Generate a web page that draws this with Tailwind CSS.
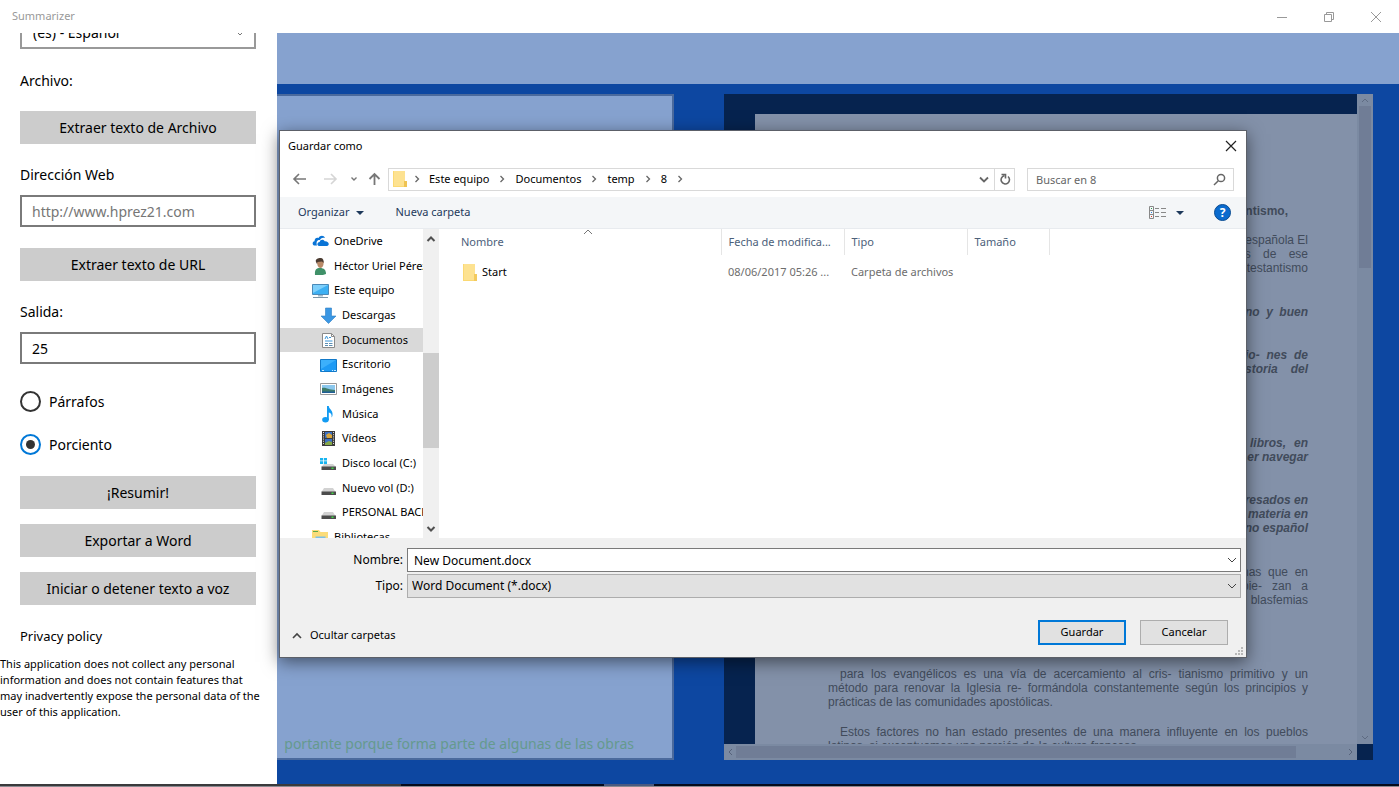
<!DOCTYPE html>
<html lang="es">
<head>
    <meta charset="UTF-8">
    <meta name="viewport" content="width=device-width, initial-scale=1.0">
    <title>Summarizer</title>
    <script src="https://cdn.jsdelivr.net/npm/@tailwindcss/browser@4"></script>
</head>
<body class="relative flex h-screen flex-col overflow-hidden bg-white font-['Noto_Sans',sans-serif] text-black">

    <!-- Barra de título -->
    <header class="flex h-[33px] shrink-0 items-center justify-between pl-3 text-[#999]">
        <span class="text-[11px]">Summarizer</span>
        <div class="flex">
            <button class="flex h-8 w-[47px] items-center justify-center" aria-label="Minimizar">
                <svg class="h-3 w-3" viewBox="0 0 12 12" fill="none" stroke="currentColor"><path d="M1 6.500h10"/></svg>
            </button>
            <button class="flex h-8 w-[47px] items-center justify-center" aria-label="Restaurar">
                <svg class="h-3 w-3" viewBox="0 0 12 12" fill="none" stroke="currentColor"><path d="M1.500 3.500h7v7h-7zM3.500 3.500v-2h7v7h-2"/></svg>
            </button>
            <button class="flex h-8 w-[47px] items-center justify-center" aria-label="Cerrar">
                <svg class="h-3 w-3" viewBox="0 0 12 12" fill="none" stroke="currentColor"><path d="M1 1l10 10M11 1L1 11"/></svg>
            </button>
        </div>
    </header>

    <main class="flex min-h-0 flex-1">

        <!-- Panel lateral -->
        <aside class="flex w-[277px] shrink-0 flex-col overflow-hidden bg-white text-sm">
            <form class="-mt-4 flex flex-col px-5 pr-[21px]">
                <div class="relative">
                    <select class="h-8 w-full appearance-none border-2 border-[#999] bg-white px-[11px]" aria-label="Idioma">
                        <option>(es) - Español</option>
                    </select>
                    <svg class="pointer-events-none absolute right-3 top-3 h-2 w-2" viewBox="0 0 8 8" fill="none" stroke="#777"><path d="M.5 2.500L4 6l3.500-3.500"/></svg>
                </div>

                <label for="archivo" class="mt-[22px] leading-5">Archivo:</label>
                <button id="archivo" type="button" class="mt-5 h-[33px] bg-[#ccc]">Extraer texto de Archivo</button>

                <label for="url" class="mt-[21px] leading-5">Dirección Web</label>
                <input id="url" type="url" placeholder="http://www.hprez21.com" class="mt-[10px] h-8 border-2 border-[#7a7a7a] px-[10px] placeholder:text-[#767676]">
                <button type="button" class="mt-[21px] h-[33px] bg-[#ccc]">Extraer texto de URL</button>

                <label for="salida" class="mt-[21px] leading-5">Salida:</label>
                <input id="salida" type="text" value="25" class="mt-[10px] h-8 border-2 border-[#7a7a7a] px-[10px]">

                <label class="mt-[27px] flex h-[21px] items-center gap-2">
                    <input type="radio" name="modo" class="h-[21px] w-[21px] appearance-none rounded-full border-2 border-[#333]">
                    Párrafos
                </label>
                <label class="mt-[22px] flex h-[21px] items-center gap-2">
                    <input type="radio" name="modo" checked class="h-[21px] w-[21px] appearance-none rounded-full border-2 border-[#0078d7] bg-[#333] bg-clip-content p-[4px]">
                    Porciento
                </label>

                <button type="button" class="mt-[21px] h-[33px] bg-[#ccc]">¡Resumir!</button>
                <button type="button" class="mt-[15px] h-[33px] bg-[#ccc]">Exportar a Word</button>
                <button type="button" class="mt-[15px] h-[33px] bg-[#ccc]">Iniciar o detener texto a voz</button>
            </form>
            <h2 class="mt-[21px] pl-5 text-[13px] leading-5">Privacy policy</h2>
            <p class="mt-[10px] whitespace-nowrap text-[11px] leading-4">This application does not collect any personal<br>information and does not contain features that<br>may inadvertently expose the personal data of the<br>user of this application.</p>
        </aside>

        <!-- Área de trabajo -->
        <section class="flex min-w-0 flex-1 flex-col bg-[#0d47a1]">
            <div class="h-[51px] shrink-0 bg-[#86a2cf]"></div>
            <div class="mt-[10px] mb-6 flex min-h-0 flex-1 gap-[50px] pr-[26px]">

                <!-- Texto original -->
                <div class="flex min-w-0 flex-[397]">
                    <div class="flex min-w-0 flex-1 items-end justify-end overflow-hidden border-2 border-l-0 border-[#4b6a9d] bg-[#86a2cf] pr-[38px] pb-1">
                        <p class="whitespace-nowrap text-sm leading-5 text-[#659a8e]">portante porque forma parte de algunas de las obras</p>
                    </div>
                </div>

                <!-- Documento resumido -->
                <div class="grid min-w-0 flex-[649] grid-cols-[1fr_16px] grid-rows-[1fr_16px] bg-[#06234f]">
                    <div class="min-h-0 overflow-hidden pt-5 pl-[31px]">
                        <article class="flex flex-col bg-[#8391a9] pt-[90px] pr-[49px] pb-10 pl-[73px] font-['Liberation_Sans',sans-serif] text-xs leading-[14px] text-[#414b5b]">
                            <h3 class="pr-5 text-right font-bold">protestantismo,</h3>
                            <div class="mt-[15px] ml-auto w-[70px] [text-align-last:justify]">
                                <p class="[text-align-last:right]">española El</p>
                                <p>os de ese</p>
                                <p class="-ml-10 [text-align-last:right]">protestantismo</p>
                            </div>
                            <p class="mt-[30px] ml-auto w-[63px] font-bold italic [text-align-last:justify]">no y buen</p>
                            <div class="mt-[29px] ml-auto w-[63px] font-bold italic [text-align-last:justify]">
                                <p>io- nes de</p>
                                <p>storia del</p>
                            </div>
                            <div class="mt-[60px] ml-auto w-[70px] font-bold italic [text-align-last:right]">
                                <p class="pl-3 [text-align-last:justify]">libros, en</p>
                                <p>er navegar</p>
                            </div>
                            <div class="mt-[29px] ml-auto w-[90px] font-bold italic [text-align-last:right]">
                                <p>interesados en</p>
                                <p>materia en</p>
                                <p>no español</p>
                            </div>
                            <div class="mt-[30px] ml-auto w-[66px] [text-align-last:justify]">
                                <p>nas que en</p>
                                <p>pie- zan a</p>
                                <p class="[text-align-last:right]">blasfemias</p>
                            </div>
                            <div class="mt-[60px] [text-align-last:justify]">
                                <p class="pl-3">para los evangélicos es una vía de acercamiento al cris- tianismo primitivo y un</p>
                                <p>método para renovar la Iglesia re- formándola constantemente según los principios y</p>
                                <p class="[text-align-last:left]">prácticas de las comunidades apostólicas.</p>
                            </div>
                            <div class="mt-4 [text-align-last:justify]">
                                <p class="pl-3">Estos factores no han estado presentes de una manera influyente en los pueblos</p>
                                <p class="[text-align-last:left]">latinos, si exceptuamos una porción de la cultura francesa.</p>
                            </div>
                        </article>
                    </div>
                    <div class="flex flex-col items-center bg-[#7b8aa2]">
                        <svg class="h-3 w-4 shrink-0" viewBox="0 0 16 12" fill="none" stroke="#5e6b82"><path d="M5 8l3-3 3 3"/></svg>
                        <div class="h-[162px] w-3 bg-[#707d96]"></div>
                        <svg class="mt-auto h-3 w-4 shrink-0" viewBox="0 0 16 12" fill="none" stroke="#5e6b82"><path d="M5 4l3 3 3-3"/></svg>
                    </div>
                    <div class="flex items-center bg-[#7b8aa2]">
                        <svg class="h-4 w-3 shrink-0" viewBox="0 0 12 16" fill="none" stroke="#56627a"><path d="M8 5L5 8l3 3"/></svg>
                        <div class="h-3 w-[560px] bg-[#707d96]"></div>
                        <svg class="ml-auto h-4 w-3 shrink-0" viewBox="0 0 12 16" fill="none" stroke="#56627a"><path d="M4 5l3 3-3 3"/></svg>
                    </div>
                </div>
            </div>
        </section>
    </main>

    <!-- Borde de la barra de tareas -->
    <footer class="flex h-[3px] shrink-0 flex-col bg-[#8a8a90]">
        <div class="flex h-[2px]">
            <div class="w-[401px] bg-[#3a3a3c]"></div>
            <div class="w-[203px] bg-[#060b1c]"></div>
            <div class="w-[50px] bg-[#4a5a80]"></div>
            <div class="flex-1 bg-[#060b1c]"></div>
        </div>
    </footer>

    <!-- Cuadro de diálogo Guardar como -->
    <div role="dialog" aria-labelledby="titulo" class="absolute top-[130px] right-[152px] left-[279px] flex flex-col border border-[#5c6068] bg-white text-[11px] shadow-[0_4px_16px_rgba(0,0,0,0.5)]">

        <div class="flex h-[30px] items-center justify-between pl-2 pr-[9px]">
            <h1 id="titulo">Guardar como</h1>
            <button aria-label="Cerrar"><svg class="h-3 w-3" viewBox="0 0 12 12" fill="none" stroke="#222" stroke-width="1.200"><path d="M1 1l10 10M11 1L1 11"/></svg></button>
        </div>

        <!-- Navegación -->
        <div class="flex h-9 items-center pr-3 pl-3">
            <button aria-label="Atrás"><svg class="h-4 w-4" viewBox="0 0 16 16" fill="none" stroke="#777" stroke-width="1.600"><path d="M14 8H2.500M7 3L2 8l5 5"/></svg></button>
            <button class="ml-[14px]" aria-label="Adelante"><svg class="h-4 w-4" viewBox="0 0 16 16" fill="none" stroke="#d5d5d5" stroke-width="1.600"><path d="M2 8h11.500M9 3l5 5-5 5"/></svg></button>
            <button class="ml-3" aria-label="Recientes"><svg class="h-2 w-2" viewBox="0 0 8 8" fill="none" stroke="#777" stroke-width="1.400"><path d="M1.500 2.500L4 5l2.500-2.500"/></svg></button>
            <button class="ml-2" aria-label="Subir"><svg class="h-4 w-4" viewBox="0 0 16 16" fill="none" stroke="#777" stroke-width="1.800"><path d="M8.500 14V3M3.500 8l5-5 5 5"/></svg></button>
            <div class="ml-[6px] flex h-[23px] min-w-0 flex-1 items-center border border-[#d9d9d9] pl-1">
                <svg class="h-[18px] w-[15px]" viewBox="0 0 15 18"><path d="M0 1h12v10h2v6H0z" fill="#fbd973"/><path d="M1 1h11v15H1z" fill="#fde291"/><path d="M11 11h3v6h-3z" fill="#efc352"/></svg>
                <svg class="ml-[5px] h-2 w-2" viewBox="0 0 8 8" fill="none" stroke="#666" stroke-width="1.300"><path d="M2.500 1l3 3-3 3"/></svg>
                <a href="#" class="ml-2">Este equipo</a>
                <svg class="ml-[9px] h-2 w-2" viewBox="0 0 8 8" fill="none" stroke="#666" stroke-width="1.300"><path d="M2.500 1l3 3-3 3"/></svg>
                <a href="#" class="ml-[9px]">Documentos</a>
                <svg class="ml-[9px] h-2 w-2" viewBox="0 0 8 8" fill="none" stroke="#666" stroke-width="1.300"><path d="M2.500 1l3 3-3 3"/></svg>
                <a href="#" class="ml-[9px]">temp</a>
                <svg class="ml-[9px] h-2 w-2" viewBox="0 0 8 8" fill="none" stroke="#666" stroke-width="1.300"><path d="M2.500 1l3 3-3 3"/></svg>
                <a href="#" class="ml-[9px]">8</a>
                <svg class="ml-[9px] h-2 w-2" viewBox="0 0 8 8" fill="none" stroke="#666" stroke-width="1.300"><path d="M2.500 1l3 3-3 3"/></svg>
                <button class="ml-auto flex h-full w-5 items-center justify-center" aria-label="Ubicaciones anteriores"><svg class="h-[10px] w-[10px]" viewBox="0 0 10 10" fill="none" stroke="#666" stroke-width="1.800"><path d="M1 3.500l4 4 4-4"/></svg></button>
                <button class="flex h-full w-5 items-center justify-center border-l border-[#d9d9d9]" aria-label="Actualizar"><svg class="h-3 w-3" viewBox="0 0 12 12" fill="none" stroke="#666" stroke-width="1.600"><path d="M9 3.500A4.200 4.200 0 1 1 5.500 2.600"/><path d="M2.500 1.500h4v4"/></svg></button>
            </div>
            <div class="relative ml-3 w-[207px]">
                <input type="search" aria-label="Buscar" placeholder="Buscar en 8" class="block h-[23px] w-full border border-[#d9d9d9] px-2 placeholder:text-[#666]">
                <svg class="absolute top-[5px] right-2 h-[13px] w-[13px]" viewBox="0 0 13 13" fill="none" stroke="#666" stroke-width="1.500"><circle cx="8" cy="5" r="3.600"/><path d="M5.300 7.700L1 12"/></svg>
            </div>
        </div>

        <!-- Barra de herramientas -->
        <div class="flex h-8 items-center border-b border-[#e8ebef] bg-[#f4f6f8] pr-[15px] pl-[18px] text-[#1e395b]">
            <button class="flex items-center gap-[7px]">Organizar
                <svg class="h-2 w-2" viewBox="0 0 8 8" fill="#1e395b"><path d="M0 2h8L4 6z"/></svg>
            </button>
            <button class="ml-[31px]">Nueva carpeta</button>
            <button class="ml-auto flex items-center gap-[10px]" aria-label="Vista">
                <svg class="h-[13px] w-[17px]" viewBox="0 0 17 13" fill="none"><path d="M.5.5h4v12h-4zM.5 4.500h4M.5 8.500h4" stroke="#888"/><path d="M2 2h1v1H2z" fill="#2a9d4a"/><path d="M2 6h1v1H2z" fill="#2a7fe0"/><path d="M2 10h1v1H2z" fill="#e03a2a"/><path d="M6 2.500h4M12 2.500h5M6 6.500h4M12 6.500h5M6 10.500h4M12 10.500h5" stroke="#888"/></svg>
                <svg class="h-2 w-2" viewBox="0 0 8 8" fill="#1e395b"><path d="M0 2h8L4 6z"/></svg>
            </button>
            <button class="ml-[30px] flex h-[17px] w-[17px] items-center justify-center rounded-full border border-[#0a4c92] bg-[#0a6bce] text-xs font-bold text-white" aria-label="Ayuda">?</button>
        </div>

        <div class="flex h-[309px]">
            <!-- Árbol de carpetas -->
            <nav class="w-[143px] shrink-0 overflow-hidden whitespace-nowrap">
                <ul class="flex h-[296px] flex-col">
                    <li class="flex flex-1 items-center gap-[5px] pl-8">
                        <svg class="h-4 w-[17px] shrink-0" viewBox="0 0 17 16" fill="#0a74d6"><path d="M3 12.500C0 12.500 0 8.500 2.500 8.200 2.500 5 5 4.200 6.500 5 8 2 12 2 13 5 10 4 8.500 6 8 7 5 6.500 4 9 5 12.500z"/><path d="M7 13c-2.500-.3-2-3.800.7-4 .3-2.800 4.300-3 5-.7C17 8 18 12.500 15 13z"/></svg>
                        OneDrive</li>
                    <li class="flex flex-1 items-center gap-[5px] pl-8">
                        <svg class="h-[17px] w-[17px] shrink-0" viewBox="0 0 17 17"><path d="M3 17c-.5-5 1-7 5-7s6 2 6 6c-3 1.500-7 1.500-11 1z" fill="#3f9068"/><path d="M5 3c0 4 1 7 3.500 7S12 6 11.500 3z" fill="#b98a68"/><path d="M4 4c-1-3 2-4 4.500-4S12 2 11.500 5L10 3.500 5.500 4 5 6z" fill="#4a3a30"/></svg>
                        Héctor Uriel Pérez</li>
                    <li class="flex flex-1 items-center gap-[5px] pl-8">
                        <svg class="h-4 w-[17px] shrink-0" viewBox="0 0 17 16"><path d="M.5 1.500h16v10H.5z" fill="#3db0f3" stroke="#4b8ab8"/><path d="M1 2h15L1 10z" fill="#7fd0fb"/><path d="M6 12h5v1.500H6z" fill="#9fb8c8"/><path d="M1 14.500h15" stroke="#7c96a8"/></svg>
                        Este equipo</li>
                    <li class="flex flex-1 items-center gap-[5px] pl-10">
                        <svg class="h-[17px] w-[17px] shrink-0" viewBox="0 0 17 17"><path d="M5.500 1h6v8h4.500l-7.500 7.500L1 9h4.500z" fill="#3b97e3" stroke="#2f7fc4" stroke-width=".6"/></svg>
                        Descargas</li>
                    <li class="flex flex-1 items-center gap-[5px] bg-[#d9d9d9] pl-10">
                        <svg class="h-[17px] w-[17px] shrink-0" viewBox="0 0 17 17"><path d="M2.500 1.500h9l3 3v11h-12z" fill="#fff" stroke="#8a8a8a"/><path d="M11.500 1.500v3h3" fill="none" stroke="#8a8a8a"/><path d="M5 7l1.500-3L8 7M9 5.500h2M5 9h7.500" fill="none" stroke="#3a95d8"/><path d="M5 11.500h3M9 11.500h3.500M5 13.500h3M9 13.500h3.500" stroke="#5c8fb4"/></svg>
                        Documentos</li>
                    <li class="flex flex-1 items-center gap-[5px] pl-10">
                        <svg class="h-4 w-[17px] shrink-0" viewBox="0 0 17 16"><path d="M.5 2.500h16v12H.5z" fill="#1e9bf5" stroke="#1279c8"/><path d="M1 3h15L1 12z" fill="#3cb0fb"/><path d="M2 13.500h2M12 13.500h1M14 13.500h2" stroke="#c8e8ff"/></svg>
                        Escritorio</li>
                    <li class="flex flex-1 items-center gap-[5px] pl-10">
                        <svg class="h-4 w-[17px] shrink-0" viewBox="0 0 17 16"><path d="M.5 2.500h16v11H.5z" fill="#fff" stroke="#9a9a9a"/><path d="M2 4h13v8H2z" fill="#8cc8ee"/><path d="M2 7c4-1 6 2 13 2v3H2z" fill="#3f7c6a"/><path d="M2 10.500h13V12H2z" fill="#1f5e96"/></svg>
                        Imágenes</li>
                    <li class="flex flex-1 items-center gap-[5px] pl-10">
                        <svg class="h-[17px] w-[17px] shrink-0" viewBox="0 0 17 17" fill="#129bf2"><ellipse cx="5.500" cy="13.800" rx="3.300" ry="2.700"/><path d="M7 0h1.800c.2 3.500 4.500 4 3.700 9.500-.2 1-.6 1.500-1 2 .6-3-.7-4.500-2.700-5v7.500H7z"/></svg>
                        Música</li>
                    <li class="flex flex-1 items-center gap-[5px] pl-10">
                        <svg class="h-[17px] w-[17px] shrink-0" viewBox="0 0 17 17"><path d="M2 1h13v15H2z" fill="#3b3b3b"/><path d="M5 2h7v6H5z" fill="#3a6fc4"/><path d="M5 9h7v6H5z" fill="#3a6fc4"/><path d="M6 5l3-2 3 2v3H7z" fill="#d9a63a"/><path d="M5 13l4-2 3 1v3H5z" fill="#86a848"/><path d="M3.500 2v13M13.500 2v13" stroke="#ddd" stroke-dasharray="1 1.200"/></svg>
                        Vídeos</li>
                    <li class="flex flex-1 items-center gap-[5px] pl-10">
                        <svg class="h-[17px] w-[17px] shrink-0" viewBox="0 0 17 17"><path d="M0 3h3v2.500H0zM3.800 3H7v2.500H3.800zM0 6.300h3V9H0zM3.800 6.300H7V9H3.800z" fill="#18b4f0"/><path d="M4 9h9l3 3H1.500z" fill="#d2d2d2"/><path d="M1.500 11.500H16V15H1.500z" fill="#4c4c4c"/><path d="M11.500 12.500h2V14h-2z" fill="#3ed843"/></svg>
                        Disco local (C:)</li>
                    <li class="flex flex-1 items-center gap-[5px] pl-10">
                        <svg class="h-[17px] w-[17px] shrink-0" viewBox="0 0 17 17"><path d="M4 8h9l2.500 4H1.500z" fill="#d2d2d2"/><path d="M1.500 11.500H16V15H1.500z" fill="#4c4c4c"/><path d="M11.500 12.500h2V14h-2z" fill="#3ed843"/></svg>
                        Nuevo vol (D:)</li>
                    <li class="flex flex-1 items-center gap-[5px] pl-10">
                        <svg class="h-[17px] w-[17px] shrink-0" viewBox="0 0 17 17"><path d="M4 8h9l2.500 4H1.500z" fill="#d2d2d2"/><path d="M1.500 11.500H16V15H1.500z" fill="#4c4c4c"/><path d="M11.500 12.500h2V14h-2z" fill="#3ed843"/></svg>
                        PERSONAL BACKUP</li>
                </ul>
                <div class="flex h-6 items-center gap-[5px] pl-8">
                    <svg class="h-[17px] w-[17px] shrink-0" viewBox="0 0 17 17"><path d="M0 1h7l1.500 2H16v13H0z" fill="#fbdc7a"/><path d="M1 2h5v1H1z" fill="#5aa84e"/><path d="M3.500 7.500h10V16h-10z" fill="#7cc0e8"/></svg>
                    Bibliotecas</div>
            </nav>
            <div class="flex w-4 shrink-0 flex-col items-center bg-[#f0f0f0]">
                <svg class="h-5 w-4 shrink-0" viewBox="0 0 16 20" fill="none" stroke="#505050" stroke-width="2"><path d="M4.500 12L8 8.500l3.500 3.500"/></svg>
                <div class="mt-[104px] h-[95px] w-full bg-[#cdcdcd]"></div>
                <svg class="mt-auto h-5 w-4 shrink-0" viewBox="0 0 16 20" fill="none" stroke="#505050" stroke-width="2"><path d="M4.500 9L8 12.500 11.500 9"/></svg>
            </div>

            <!-- Lista de archivos -->
            <div class="relative min-w-0 flex-1">
                <svg class="absolute top-0 left-[144px] h-[6px] w-[10px]" viewBox="0 0 10 6" fill="none" stroke="#777"><path d="M1 5l4-4 4 4"/></svg>
                <table class="w-[610px] table-fixed text-left">
                    <thead>
                        <tr class="h-[26px] text-[#4c607a]">
                            <th class="w-[282px] border-r border-[#e5e5e5] pl-[22px] font-normal">Nombre</th>
                            <th class="w-[123px] border-r border-[#e5e5e5] pl-[7px] font-normal">Fecha de modifica...</th>
                            <th class="w-[123px] border-r border-[#e5e5e5] pl-[7px] font-normal">Tipo</th>
                            <th class="w-[82px] border-r border-[#e5e5e5] pl-[7px] font-normal">Tamaño</th>
                        </tr>
                    </thead>
                    <tbody>
                        <tr class="h-[34px] text-[#6d6d6d]">
                            <td class="pl-6 text-black">
                                <span class="flex items-center gap-[5px]">
                                    <svg class="h-[17px] w-[14px]" viewBox="0 0 14 17"><path d="M0 0h12v10h2v7H0z" fill="#fbd973"/><path d="M1 0h11v16H1z" fill="#fde291"/><path d="M11 10h3v7h-3z" fill="#f3ca5e"/></svg>
                                    Start
                                </span>
                            </td>
                            <td class="pl-[7px]">08/06/2017 05:26 ...</td>
                            <td class="pl-[7px]">Carpeta de archivos</td>
                            <td></td>
                        </tr>
                    </tbody>
                </table>
            </div>
        </div>

        <!-- Nombre, tipo y acciones -->
        <div class="relative bg-[#f0f0f0] pt-[10px] pr-[5px] pb-3">
            <div class="grid grid-cols-[123px_1fr] items-center gap-x-1 gap-y-[2px] text-xs">
                <label for="nombre" class="text-right">Nombre:</label>
                <div class="relative">
                    <input id="nombre" type="text" value="New Document.docx" class="block h-6 w-full border border-[#7a7a7a] bg-white px-[6px]">
                    <svg class="pointer-events-none absolute top-[7px] right-1 h-[10px] w-[10px]" viewBox="0 0 10 10" fill="none" stroke="#444"><path d="M1 3l4 4 4-4"/></svg>
                </div>
                <label for="tipo" class="text-right">Tipo:</label>
                <div class="relative">
                    <select id="tipo" class="block h-6 w-full appearance-none border border-[#adadad] bg-[#e1e1e1] px-1">
                        <option>Word Document (*.docx)</option>
                    </select>
                    <svg class="pointer-events-none absolute top-[7px] right-1 h-[10px] w-[10px]" viewBox="0 0 10 10" fill="none" stroke="#444"><path d="M1 3l4 4 4-4"/></svg>
                </div>
            </div>
            <div class="mt-[22px] flex items-center gap-[14px] pr-[13px] pl-3">
                <button class="mr-auto flex items-center gap-2 pt-[6px]">
                    <svg class="h-[10px] w-[10px]" viewBox="0 0 10 10" fill="none" stroke="#444" stroke-width="1.600"><path d="M1 7l4-4 4 4"/></svg>
                    Ocultar carpetas
                </button>
                <button class="h-[25px] w-[88px] border-2 border-[#0078d7] bg-[#e1e1e1]">Guardar</button>
                <button class="h-[25px] w-[88px] border border-[#adadad] bg-[#e1e1e1]">Cancelar</button>
            </div>
            <svg class="absolute right-[2px] bottom-[1px] h-[10px] w-[10px]" viewBox="0 0 10 10" fill="#b8b8b8"><path d="M7 1h2v2H7zM4 4h2v2H4zM7 4h2v2H7zM1 7h2v2H1zM4 7h2v2H4zM7 7h2v2H7z"/></svg>
        </div>
    </div>
</body>
</html>
